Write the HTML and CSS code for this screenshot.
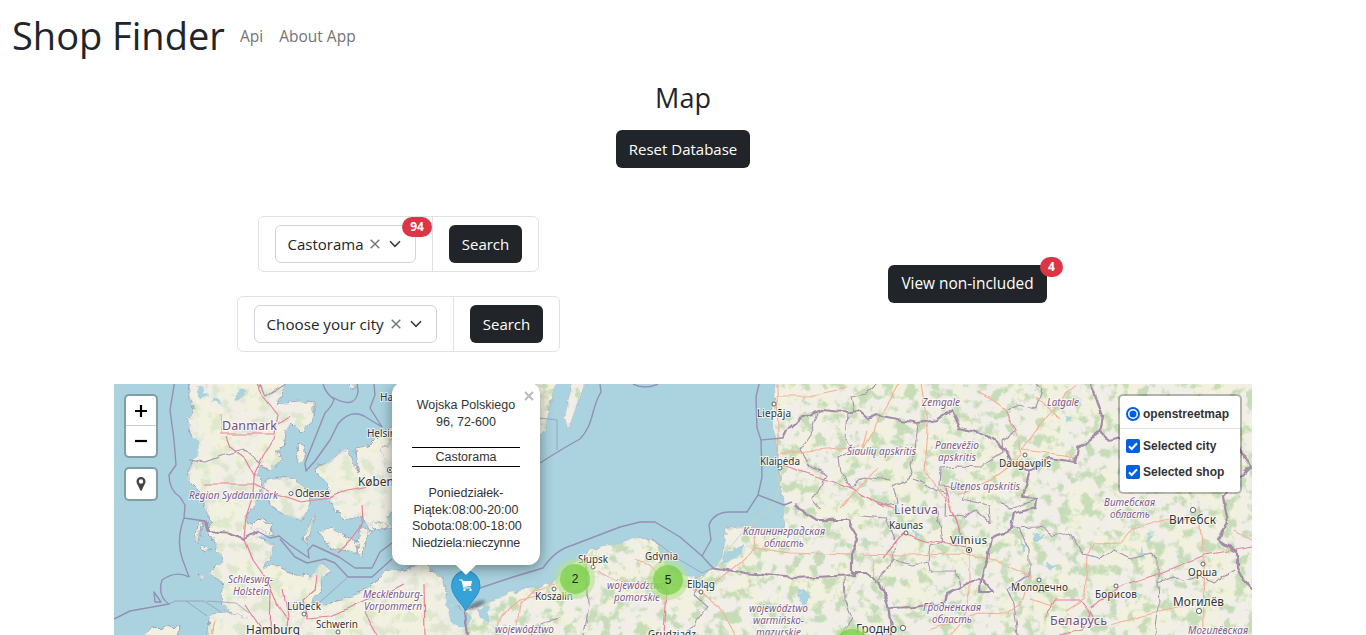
FILE: index.html
```html
<!DOCTYPE html>
<html lang="en">
<head>
<meta charset="utf-8">
<title>Shop Finder</title>
<link rel="stylesheet" href="styles.css">
</head>
<body>
<header class="navbar">
  <h1 class="brand">Shop Finder</h1>
  <nav class="links"><a class="api">Api</a><a class="about">About App</a></nav>
</header>
<main class="container">
  <h2 class="title">Map</h2>
  <button class="btn reset">Reset Database</button>
  <section class="controls">
    <div class="filters">
      <div class="group group-shop">
        <div class="cell"><div class="select"><span class="shop-text">Castorama</span>
          <svg class="clear" viewBox="0 0 10 10"><path d="M.7.7l8.6 8.6M9.3.7L.7 9.3"/></svg>
          <svg class="chev" viewBox="0 0 12 8"><path d="M1 1.3l5 5 5-5"/></svg>
          <span class="badge">94</span></div></div>
        <div class="cell"><button class="btn search">Search</button></div>
      </div>
      <div class="group group-city">
        <div class="cell"><div class="select"><span class="city-text">Choose your city</span>
          <svg class="clear" viewBox="0 0 10 10"><path d="M.7.7l8.6 8.6M9.3.7L.7 9.3"/></svg>
          <svg class="chev" viewBox="0 0 12 8"><path d="M1 1.3l5 5 5-5"/></svg></div></div>
        <div class="cell"><button class="btn search">Search</button></div>
      </div>
    </div>
    <div class="side"><button class="btn view">View non-included<span class="badge">4</span></button></div>
  </section>
  <section class="map">
    <svg class="tiles" viewBox="114 384 1138 251">
      <defs>
        <filter id="rough" filterUnits="userSpaceOnUse" x="100" y="370" width="1170" height="280" color-interpolation-filters="sRGB">
          <feTurbulence type="fractalNoise" baseFrequency=".14" numOctaves="3" seed="4" result="n"/>
          <feDisplacementMap in="SourceGraphic" in2="n" scale="8" xChannelSelector="R" yChannelSelector="G"/>
        </filter>
        <filter id="jag" filterUnits="userSpaceOnUse" x="100" y="370" width="1170" height="280" color-interpolation-filters="sRGB">
          <feTurbulence type="fractalNoise" baseFrequency=".11" numOctaves="1" seed="9" result="n"/>
          <feDisplacementMap in="SourceGraphic" in2="n" scale="7" xChannelSelector="R" yChannelSelector="G"/>
        </filter>
        <filter id="soft-jag" filterUnits="userSpaceOnUse" x="100" y="370" width="1170" height="280" color-interpolation-filters="sRGB">
          <feTurbulence type="fractalNoise" baseFrequency=".06" numOctaves="1" seed="5" result="n"/>
          <feDisplacementMap in="SourceGraphic" in2="n" scale="6" xChannelSelector="R" yChannelSelector="G"/>
        </filter>
        <filter id="forest" filterUnits="userSpaceOnUse" x="100" y="370" width="1170" height="280" color-interpolation-filters="sRGB">
          <feTurbulence type="fractalNoise" baseFrequency=".085" numOctaves="5" seed="12"/>
          <feColorMatrix values="0 0 0 0 .68  0 0 0 0 .82  0 0 0 0 .62  6 0 0 0 -3" result="t"/>
          <feComposite in="t" in2="SourceAlpha" operator="in"/>
        </filter>
        <filter id="field" filterUnits="userSpaceOnUse" x="100" y="370" width="1170" height="280" color-interpolation-filters="sRGB">
          <feTurbulence type="fractalNoise" baseFrequency=".03" numOctaves="3" seed="31"/>
          <feColorMatrix values="0 0 0 0 .945  0 0 0 0 .933  0 0 0 0 .91  0 6 0 0 -2.4" result="t"/>
          <feComposite in="t" in2="SourceAlpha" operator="in"/>
        </filter>
        <g id="west">
          <path d="M191 370L189 397L194 410L188 420L193 440L197 455L190 468L187 480L193 485L203 495L205 508L212 522L207 531L214 540L217 550L225 560L209 573L224 583L221 593L224 605L231 612L246 619L224 611L209 615L207 650H468L465 612L447 602L442 577L420 563L404 572L387 568L377 582L351 597L327 605L309 602L321 592L321 578L332 570L321 563L311 577L291 573L274 565L261 568L272 555L272 545L257 537L276 535L264 520L247 525L247 512L255 505L261 483L257 475L261 465L271 470L282 460L276 452L284 447L286 433L291 422L301 432L314 417L314 403L300 401L276 405L291 370Z"/>
          <path d="M267 480L287 477L301 483L311 497L311 505L301 520L285 515L270 505L262 490Z"/>
          <path d="M314 467L328 463L341 452L347 448L358 472L356 448L372 444L386 430L400 425V508L386 515L392 528L370 530L362 515L345 520L335 510L330 500L327 485Z"/>
          <path d="M315 513L311 530L306 546L304 536ZM319 532L330 528L342 534L359 542L356 553L342 551L331 548ZM362 527L371 532L364 545L361 558L355 545ZM369 525L377 521L389 527L378 530ZM297 444L304 446L304 461L298 463ZM349 388L353 380L355 388ZM381 450L400 430V480L388 475ZM199 523L202 521L197 545L195 538ZM201 545L211 548L203 552ZM198 575L204 576L202 580ZM206 384L208 388L202 389ZM260 517L272 525L269 533L250 527Z"/>
        </g>
        <path id="east" d="M460 650L465 612L490 602L513 592L553 583L567 568L593 548L620 544L633 538L652 539L660 548L666 568L683 576L700 577L715 568L723 557L727 528L747 527L760 530L783 530L785 505L779 470L776 437L773 427L776 370H1270V650ZM530 370H562L552 395L549 410L545 430L530 440ZM572 370L590 370L579 398L568 429L565 417L571 390Z"/>
      </defs>
      <rect class="water" x="114" y="384" width="1138" height="251"/>
      <g class="west-land" filter="url(#rough)"><use href="#west"/><path d="M143 638L151 628L180 626L177 640Z"/></g>
      <g class="land" filter="url(#rough)"><use href="#east"/></g>
      <g filter="url(#field)"><use href="#east"/></g>
      <g class="west-field" filter="url(#field)"><use href="#west"/></g>
      <g class="light-forest" filter="url(#forest)"><use href="#west"/></g>
      <g class="dense-forest" filter="url(#forest)"><use href="#east"/></g>
      <g class="lakes" filter="url(#rough)">
        <path d="M195 384L209 395L199 399ZM215 397L222 405L211 401ZM190 435L200 443L194 454ZM241 386L248 393L234 401L238 389ZM447 601L460 610L473 617L465 628L452 622L446 610ZM477 608L490 605L488 623L480 617ZM726 552L743 545L742 554L721 566ZM803 587L811 596L804 606L797 595ZM1033 532L1045 536L1036 543ZM1019 537L1026 546L1024 553ZM1046 563L1061 566L1048 569ZM1140 548L1146 552L1141 558ZM1063 415L1071 416L1069 423ZM1152 434L1160 439L1154 443ZM1147 536L1154 534L1148 541ZM914 529L922 536L916 540Z"/>
      </g>
      <g class="spit"><path d="M778 475Q783 492 768 510L747 527L722 557L700 580M652 539L667 552"/></g>
      <g class="admin" filter="url(#jag)">
        <path d="M189 459L205 462L224 455L244 450L260 464M260 384L265 397L286 384M818 413L811 435L801 450L807 464L827 476L813 500L820 510M847 413L845 438L853 450L838 458L840 472L850 487L862 477L890 480M876 384L866 393L851 396L854 413M918 424L915 450L910 465L913 477L894 487L898 502L878 505M915 479L930 488L946 494L945 515L965 517L976 510L990 522L989 505L962 500L967 487L940 486L941 468L957 466L980 467L1003 452L1002 442L1016 431L1006 411L1017 405L1036 408L1042 390L1036 384M1000 502L1011 510L1027 502L1037 498M862 516L885 518L895 541L893 560L890 565L880 575L875 582M893 560L913 565L929 562L931 571L955 571L960 585L949 594M929 562L931 545L942 542L936 510M1012 528L1036 527L1042 525L1052 536L1070 533L1083 555L1100 559L1114 550L1130 558L1150 553L1158 560L1158 582L1172 577L1183 580L1201 576L1213 583L1235 570M1019 528L1029 550L1029 574L1007 589L1014 605L1018 635M1158 582L1159 605L1155 635M700 586L694 595L707 606L696 622L685 635M844 575L845 600L852 618L840 635M585 564L588 585L589 605L584 635M530 635L541 622L560 618"/>
      </g>
      <g class="roads" filter="url(#soft-jag)">
        <path class="major" d="M250 370L263 397L277 415L273 440L264 455L254 477L253 495L247 514L245 540L253 560L267 580L278 605L288 619L286 635M220 434L273 434M226 436L230 447L245 459L255 478M204 484L255 484L272 493L290 498L301 502L330 498L348 490L391 481M278 424L291 417M362 505L363 523L350 540L338 552M317 576L315 590L303 601L307 619M271 590L270 635M245 605L265 635M307 619L330 617L365 600L392 590L404 584M365 612L378 635M283 590L289 620M424 585L425 635M667 590L664 635M783 465L800 471L850 487L885 508M862 495L895 510M945 487L951 510L966 547M903 533L925 541L966 547M903 533L882 558M1045 617L1055 600L1080 600L1090 613L1082 630L1060 635M1090 607L1123 585L1160 573L1205 555L1252 547M1090 610L1095 620"/>
        <path class="minor" d="M777 384L778 435L779 468M777 396L808 396L846 388M777 454L817 450L860 446M877 468L862 485L840 508M867 430L862 450L899 384M921 384L928 430L925 470L952 508M978 392L1005 408L1017 435L1022 455M1022 450L1064 455L1074 460M1022 450L1040 425L1075 384M1022 456L990 480L958 495M1036 397L1060 420M860 554L900 555L965 554L995 559L1030 577L1022 602L1007 614L978 613L930 630M875 560L872 580M1030 599L1055 607M1066 610L1085 598L1087 555L1095 543L1120 542L1130 530L1165 520L1190 518M1198 505L1203 555L1204 635M1234 530L1252 540M1110 625L1150 614L1190 605M970 548L970 590L963 620L950 635M756 548L790 553L852 555M756 548L742 561L711 585M753 525L756 548L790 553M667 583L697 590L720 608L735 635M636 560L650 565L664 585M555 584L535 590L520 605L517 625M494 635L502 615L520 600L548 593M598 571L615 580L650 588M210 635L216 620L212 635M220 413L222 435"/>
      </g>
      <g class="sea-border">
        <path d="M175 380L170 410L174 440L176 465L169 475Q169 490 180 497L185 505L184 518Q176 540 182 558L189 577Q176 570 162 580Q157 596 169 604L130 611L114 619M154 592L161 602L155 602ZM184 518L205 521M323 384Q326 394 334 399Q333 405 325 413L305 463L306 471L315 461L330 440L338 424Q350 409 364 416L382 427L370 408L375 395L374 384M332 397Q355 410 358 392L357 380M257 531L270 538L279 536L290 545L309 558L308 550L313 545L339 557L355 568H372L380 552L392 543M280 539L295 557L307 563L325 559L335 563L348 577H372L392 559M480 588L513 577L543 568Q555 550 573 545L620 527L640 522H655L680 537L702 556L712 567M702 556L711 540L709 525Q714 512 730 512H747L758 495L784 505L792 502M540 463Q565 447 580 439C594 425 591 408 601 392L600 384M633 384Q645 390 658 384M760 380L756 397L757 428L761 440L762 477L758 495M761 440L783 438"/>
        <path class="thin" d="M169 604L175 601H204L221 612M186 601L207 616M207 601L236 603L249 613M348 577L320 602M652 539L680 560L702 573L713 568M540 418L557 420V450"/>
      </g>
      <g class="border" filter="url(#jag)">
        <path d="M205 521L209 531L232 533L243 540L257 532M465 612L468 635M712 567L745 573L795 578L855 575M783 438L787 430L800 418L822 410L850 413L860 412L867 418L877 415L917 423L937 420L952 410L960 428L987 435L1007 452L1012 463L1030 470L1050 458L1075 462L1078 448L1100 432L1103 417L1090 380M1100 432L1107 440L1130 435M1030 470L1023 497L1037 498L1036 508L1015 513L1012 528L992 538L988 558L982 578L970 582L947 593L945 603L913 607L888 608M982 578L993 592L980 592L981 580M793 505L817 520L847 520L858 538L852 552L852 573L867 573L880 583L888 605L892 635M1240 447L1250 467L1223 497L1228 522L1218 540L1237 552L1237 568L1243 580L1254 591"/>
      </g>
      <g class="places">
        <circle cx="291" cy="493.5" r="2"/><circle cx="304" cy="614" r="2"/><circle cx="338" cy="632" r="2"/><circle cx="554" cy="589" r="2"/><circle cx="593" cy="567" r="2"/><circle cx="701" cy="592" r="2"/><circle cx="774" cy="404" r="2"/><circle cx="780" cy="468" r="2"/><circle cx="1025" cy="455" r="2"/><circle cx="906" cy="533" r="2"/><circle cx="969" cy="550" r="2.7"/><circle class="dot" cx="969" cy="550" r="1.2"/><circle cx="1039" cy="580" r="2"/><circle cx="1116" cy="586" r="2"/><circle cx="1203" cy="564" r="2"/><circle cx="1193" cy="510" r="2.6"/><circle cx="1199" cy="611" r="2.6"/><circle cx="903" cy="628" r="2.6"/><circle cx="390" cy="470" r="2.7"/><circle class="dot" cx="390" cy="470" r="1"/>
      </g>
      <g class="country">
        <text x="222" y="430" textLength="55">Danmark</text><text x="894" y="514" textLength="44">Lietuva</text><text x="1050" y="625" textLength="57">Беларусь</text>
      </g>
      <g class="region">
        <text x="189" y="499" textLength="89">Region Syddanmark</text>
        <text x="228" y="583" textLength="45">Schleswig-</text><text x="233" y="595" textLength="36">Holstein</text>
        <text x="363" y="598" textLength="60">Mecklenburg-</text><text x="364" y="610" textLength="58">Vorpommern</text>
        <text x="495" y="633" textLength="59">województwo</text>
        <text x="607" y="589" textLength="59">województwo</text><text x="614" y="601" textLength="46">pomorskie</text>
        <text x="749" y="612" textLength="59">województwo</text><text x="753" y="624" textLength="51">warmińsko-</text><text x="756" y="636" textLength="45">mazurskie</text>
        <text x="743" y="535" textLength="82">Калининградская</text><text x="764" y="547" textLength="40">область</text>
        <text x="847" y="455" textLength="69">Šiaulių apskritis</text><text x="922" y="406" textLength="38">Zemgale</text><text x="1047" y="406" textLength="32">Latgale</text>
        <text x="935" y="449" textLength="44">Panevėžio</text><text x="938" y="461" textLength="38">apskritis</text><text x="950" y="490" textLength="70">Utenos apskritis</text>
        <text x="1104" y="506" textLength="51">Витебская</text><text x="1110" y="518" textLength="40">область</text>
        <text x="923" y="611" textLength="58">Гродненская</text><text x="932" y="623" textLength="40">область</text><text x="1188" y="634" textLength="60">Могилёвская</text>
      </g>
      <g class="town">
        <text x="367" y="437" textLength="45">Helsingør</text><text x="380" y="401" textLength="45">Halmstad</text><text x="295" y="497" textLength="35">Odense</text><text x="287" y="610" textLength="34">Lübeck</text><text x="316" y="628" textLength="42">Schwerin</text>
        <text x="535" y="600" textLength="38">Koszalin</text><text x="578" y="563" textLength="30">Słupsk</text><text x="645" y="560" textLength="33">Gdynia</text><text x="687" y="588" textLength="28">Elbląg</text><text x="648" y="638" textLength="48">Grudziądz</text>
        <text x="757" y="417" textLength="34">Liepāja</text><text x="760" y="465" textLength="40">Klaipėda</text><text x="999" y="467" textLength="52">Daugavpils</text><text x="889" y="529" textLength="34">Kaunas</text>
        <text x="1011" y="591" textLength="57">Молодечно</text><text x="1095" y="598" textLength="42">Борисов</text><text x="1188" y="576" textLength="29">Орша</text>
      </g>
      <g class="city">
        <text x="358" y="486" textLength="63">København</text><text x="246" y="634" textLength="54">Hamburg</text><text class="mid" x="950" y="544" textLength="37">Vilnius</text><text x="1169" y="524" textLength="47">Витебск</text><text x="1173" y="606" textLength="51">Могилёв</text><text x="856" y="633" textLength="41">Гродно</text>
      </g>
      <ellipse class="pin-shadow" cx="476" cy="605" rx="10" ry="3" transform="rotate(-24 476 605)"/>
      <path class="pin" d="M465.500 611C462 603 451.500 596 451.500 585.500A14 14.500 0 0 1 480 585.500C480 596 469 603 465.500 611Z"/>
      <path class="cart" d="M459 580H462L464 588H471"/><path class="cart-fill" d="M462.300 581H472L471 586L463.500 587ZM463.500 589h2v2h-2ZM469.500 589h2v2h-2Z"/>
      <g class="cluster"><circle class="outer" cx="575" cy="579" r="20"/><circle class="inner" cx="575" cy="579" r="15"/><text x="575" y="583">2</text><circle class="outer" cx="668" cy="580" r="20"/><circle class="inner" cx="668" cy="580" r="15"/><text x="668" y="584">5</text><circle class="outer" cx="852" cy="646" r="20"/><circle class="inner" cx="852" cy="646" r="17"/></g>
    </svg>
    <div class="popup">
      <svg class="close" viewBox="0 0 10 10"><path d="M1 1l8 8M9 1L1 9"/></svg>
      <p class="address">Wojska Polskiego<br>96, 72-600</p>
      <p class="shop">Castorama</p>
      <p class="hours">Poniedziałek-<br>Piątek:08:00-20:00<br>Sobota:08:00-18:00<br><span class="closed">Niedziela:nieczynne</span></p>
    </div>
    <div class="map-tools">
      <div class="bar"><div class="tool"><svg viewBox="0 0 14 14"><path d="M1 7h12M7 1v12"/></svg></div><div class="tool"><svg viewBox="0 0 14 14"><path d="M1 7h12"/></svg></div></div>
      <div class="bar"><div class="tool"><svg class="locate" viewBox="0 0 10 16"><path d="M5 1A4.500 4.500 0 0 0 .5 5.500C.5 7 1.300 8 2 9.500L4.200 14.300Q5 15.700 5.800 14.300L8 9.500C8.700 8 9.500 7 9.500 5.500A4.500 4.500 0 0 0 5 1ZM5 3.300a2.200 2.200 0 1 1 0 4.400a2.200 2.200 0 0 1 0-4.400Z"/></svg></div></div>
    </div>
    <div class="layers">
      <div class="option base"><svg viewBox="0 0 14 14"><circle class="ring" cx="7" cy="7" r="6"/><circle class="blue" cx="7" cy="7" r="3.500"/></svg><span>openstreetmap</span></div>
      <div class="option"><svg viewBox="0 0 14 14"><rect class="blue" width="14" height="14" rx="2"/><path class="tick" d="M3 7.300l2.700 2.700L11 4.300"/></svg><span>Selected city</span></div>
      <div class="option"><svg viewBox="0 0 14 14"><rect class="blue" width="14" height="14" rx="2"/><path class="tick" d="M3 7.300l2.700 2.700L11 4.300"/></svg><span>Selected shop</span></div>
    </div>
  </section>
</main>
</body>
</html>
```

FILE: styles.css
```css
* { box-sizing: border-box; }
body { margin: 0; height: 635px; overflow: hidden; color: #212529; background: #fff; font-family: "Open Sans", "Noto Sans", sans-serif; font-size: 15px; line-height: 24px; }
h1, h2, p { margin: 0; font-weight: 400; }
.navbar { display: flex; align-items: center; height: 72px; padding: 0 12px 3px; }
.brand { width: 228px; font-size: 38px; line-height: 48px; white-space: nowrap; }
.links { display: flex; gap: 16px; padding-top: 3px; color: #737373; font-size: 15.5px; }
.container { display: flex; flex-direction: column; align-items: center; width: 1138px; margin: 0 auto; }
.title { padding-top: 9px; font-size: 27px; line-height: 34px; }
.btn { height: 38px; padding: 0; border: 0; border-radius: 6px; background: #212529; color: #fff; font: inherit; white-space: nowrap; }
.reset { width: 134px; margin-top: 15px; }
.controls { display: flex; width: 100%; margin-top: 48px; height: 136px; }
.filters { width: 569px; display: flex; flex-direction: column; align-items: center; gap: 24px; }
.side { flex: 1; display: flex; align-items: center; justify-content: center; }
.group { display: flex; height: 56px; border: 1px solid #dee2e6; border-radius: 6px; }
.group-shop { width: 281px; }
.group-city { width: 323px; }
.cell { padding: 8px 16px; }
.cell + .cell { border-left: 1px solid #dee2e6; }
.select { position: relative; display: flex; align-items: center; height: 38px; padding-left: 11.5px; border: 1px solid #ced4da; border-radius: 6px; white-space: nowrap; }
.group-shop .select { width: 141px; }
.group-city .select { width: 183px; }
.shop-text { width: 82px; }
.city-text { width: 124px; font-size: 15.2px; }
.clear { width: 10px; height: 10px; fill: none; stroke: #6c757d; stroke-width: 1.4; }
.chev { width: 12px; height: 8px; margin-left: 9.5px; fill: none; stroke: #343a40; stroke-width: 1.6; }
.search { width: 73px; }
.view { position: relative; width: 159px; font-size: 15.4px; }
.badge { position: absolute; top: -9px; right: -17px; width: 30px; height: 20px; border-radius: 10px; background: #dc3545; color: #fff; font-size: 12px; font-weight: 700; line-height: 20px; text-align: center; }
.view .badge { top: -8px; right: -16px; width: 23px; }
.map { position: relative; width: 1138px; height: 251px; margin-top: 32px; overflow: hidden; font-family: "Liberation Sans", Arial, sans-serif; }
.tiles { display: block; width: 1138px; height: 251px; }
.water { fill: #aad3df; }
.land, .west-land { fill: #f2f1df; }
.land { stroke: #a9aabf; stroke-width: .6; }
.west-land { stroke: #9c9bbb; stroke-width: .9; }
.west-field { opacity: .7; }
.light-forest { opacity: .28; }
.dense-forest { opacity: .62; }
.lakes { fill: #aad3df; }
.spit, .admin, .roads, .sea-border, .border { fill: none; stroke-linejoin: round; }
.spit { stroke: #c7d6b5; stroke-width: 1; }
.admin { stroke: #a893b0; stroke-width: 1.1; }
.major { stroke: #e6829a; stroke-width: 1.2; }
.minor { stroke: #f5b09a; stroke-width: 1.1; }
.sea-border { stroke: #9490b3; stroke-width: 1.4; }
.sea-border .thin { stroke-width: .7; }
.border { stroke: #a38ca8; stroke-width: 2.2; }
.places { fill: #fff; stroke: #444; stroke-width: .8; }
.places .dot { fill: #444; stroke: none; }
.country, .region, .town, .city { font-family: "Noto Sans", sans-serif; paint-order: stroke; stroke: rgba(255,255,255,.7); stroke-width: 2px; }
.country { font-size: 12.5px; fill: #75517c; }
.region { font-size: 10px; font-style: italic; fill: #80588a; }
.town { font-size: 10px; fill: #333; }
.city { font-size: 11.8px; fill: #333; }
.city .mid { font-size: 11px; }
.pin { fill: #36a3d8; stroke: #2683ad; stroke-width: .8; }
.pin-shadow { fill: #334; opacity: .5; filter: blur(1.5px); }
.cart { fill: none; stroke: #fff; stroke-width: 1.2; }
.cart-fill { fill: #fff; }
.outer { fill: rgba(181,226,140,.6); }
.inner { fill: rgba(110,204,57,.65); }
.cluster text { font-size: 12px; text-anchor: middle; fill: #222; }
.popup { position: absolute; left: 278px; top: -2px; width: 148px; height: 183px; padding: 15px 20px; border-radius: 12px; background: #fff; color: #333; font-size: 12.5px; line-height: 17px; text-align: center; white-space: nowrap; box-shadow: 0 3px 14px rgba(0,0,0,.4); }
.popup::after { content: ""; position: absolute; left: 64px; top: 183px; border: 10px solid transparent; border-top-color: #fff; border-bottom: 0; }
.close { position: absolute; top: 9px; right: 6px; width: 10px; height: 10px; stroke: #bbb; stroke-width: 2; }
.shop { height: 20px; margin: 16px 0 18px; border: solid #000; border-width: 1px 0; line-height: 18px; }
.hours { display: flow-root; line-height: 16.7px; }
.closed { letter-spacing: -.17px; }
.map-tools { position: absolute; left: 10px; top: 10px; display: grid; gap: 9px; }
.bar, .layers { border: 2px solid rgba(0,0,0,.25); border-radius: 5px; background: #fff; background-clip: padding-box; }
.tool { display: flex; align-items: center; justify-content: center; width: 30px; height: 30px; }
.tool:first-child:not(:last-child) { height: 29px; }
.tool + .tool { height: 31px; border-top: 1px solid #ccc; }
.tool svg { width: 14px; height: 14px; stroke: #000; stroke-width: 2.2; }
.tool .locate { width: 10px; height: 16px; fill: #444; fill-rule: evenodd; stroke: none; }
.layers { position: absolute; top: 10px; right: 10px; width: 124px; height: 100px; padding-top: 5px; color: #333; font-size: 12px; font-weight: 700; }
.option { display: flex; align-items: center; gap: 3px; height: 26px; padding-left: 6px; }
.option.base { height: 28px; padding-bottom: 1px; margin-bottom: 4px; border-bottom: 1px solid #ddd; }
.option svg { width: 14px; height: 14px; }
.ring { fill: #fff; stroke: #0060df; stroke-width: 2; }
.blue { fill: #0060df; }
.tick { fill: none; stroke: #fff; stroke-width: 2; }
```
